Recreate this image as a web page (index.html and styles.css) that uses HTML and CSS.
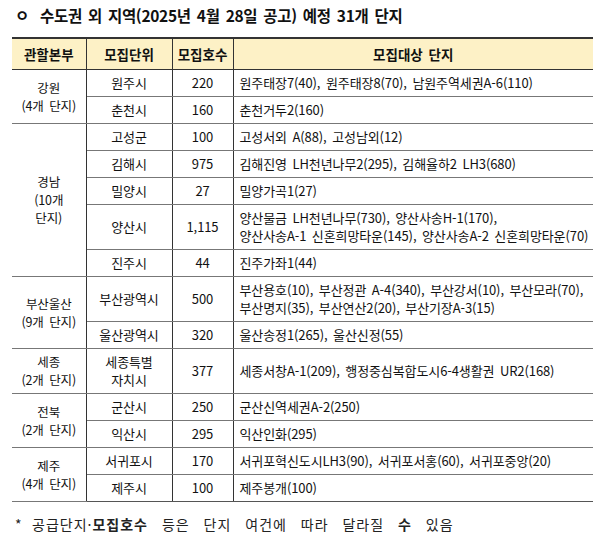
FILE: index.html
```html
<!DOCTYPE html>
<html lang="ko">
<head>
<meta charset="utf-8">
<link rel="stylesheet" href="styles.css">
</head>
<body>
<div class="page">
  <h1 class="title"><span class="bullet">ㅇ</span> 수도권 외 지역(2025년 4월 28일 공고) 예정 31개 단지</h1>
  <table class="tbl">
    <colgroup>
      <col class="c1"><col class="c2"><col class="c3"><col class="c4">
    </colgroup>
    <thead>
      <tr class="hd"><th>관할본부</th><th>모집단위</th><th>모집호수</th><th>모집대상 단지</th></tr>
    </thead>
    <tbody>
      <tr class="r1"><td rowspan="2" class="grp">강원<br>(4개 단지)</td><td>원주시</td><td>220</td><td class="list">원주태장7(40), 원주태장8(70), 남원주역세권A-6(110)</td></tr>
      <tr class="r1"><td>춘천시</td><td>160</td><td class="list">춘천거두2(160)</td></tr>

      <tr class="r1 gtop"><td rowspan="5" class="grp">경남<br>(10개<br>단지)</td><td>고성군</td><td>100</td><td class="list">고성서외 A(88), 고성남외(12)</td></tr>
      <tr class="r1"><td>김해시</td><td>975</td><td class="list">김해진영 LH천년나무2(295), 김해율하2 LH3(680)</td></tr>
      <tr class="r1"><td>밀양시</td><td>27</td><td class="list">밀양가곡1(27)</td></tr>
      <tr class="r2"><td>양산시</td><td>1,115</td><td class="list">양산물금 LH천년나무(730), 양산사송H-1(170),<br>양산사송A-1 신혼희망타운(145), 양산사송A-2 신혼희망타운(70)</td></tr>
      <tr class="r1"><td>진주시</td><td>44</td><td class="list">진주가좌1(44)</td></tr>

      <tr class="r2 gtop"><td rowspan="2" class="grp">부산울산<br>(9개 단지)</td><td>부산광역시</td><td>500</td><td class="list">부산용호(10), 부산정관 A-4(340), 부산강서(10), 부산모라(70),<br>부산명지(35), 부산연산2(20), 부산기장A-3(15)</td></tr>
      <tr class="r1"><td>울산광역시</td><td>320</td><td class="list">울산송정1(265), 울산신정(55)</td></tr>

      <tr class="r2 gtop"><td class="grp">세종<br>(2개 단지)</td><td>세종특별<br>자치시</td><td>377</td><td class="list">세종서창A-1(209), 행정중심복합도시6-4생활권 UR2(168)</td></tr>

      <tr class="r1 gtop"><td rowspan="2" class="grp">전북<br>(2개 단지)</td><td>군산시</td><td>250</td><td class="list">군산신역세권A-2(250)</td></tr>
      <tr class="r1"><td>익산시</td><td>295</td><td class="list">익산인화(295)</td></tr>

      <tr class="r1 gtop"><td rowspan="2" class="grp">제주<br>(4개 단지)</td><td>서귀포시</td><td>170</td><td class="list">서귀포혁신도시LH3(90), 서귀포서홍(60), 서귀포중앙(20)</td></tr>
      <tr class="r1 last"><td>제주시</td><td>100</td><td class="list">제주봉개(100)</td></tr>
    </tbody>
  </table>
  <p class="note"><span class="star">*</span>공급단지·<b>모집호수</b> 등은 단지 여건에 따라 달라질 <b>수</b> 있음</p>
</div>
</body>
</html>
```
FILE: styles.css
```css
html, body {
  margin: 0;
  padding: 0;
  background: #ffffff;
}
body {
  font-family: "Noto Sans CJK KR", "Noto Sans", sans-serif;
  color: #111;
}
.page {
  width: 600px;
  padding: 5px 0 0 12px;
  box-sizing: border-box;
}
.title {
  margin: 0 0 0 3px;
  font-size: 15.5px;
  font-weight: 700;
  line-height: 21px;
  letter-spacing: -0.3px;
  word-spacing: 2px;
  color: #111;
}
.bullet {
  font-weight: 700;
  margin-right: 5px;
}
.tbl {
  margin-top: 11px;
  width: 581px;
  border-collapse: collapse;
  table-layout: fixed;
  font-size: 13px;
  letter-spacing: -0.1px;
  word-spacing: 2px;
}
.c1 { width: 74px; }
.c2 { width: 86px; }
.c3 { width: 61px; }
.c4 { width: 360px; }
.tbl th, .tbl td {
  border-left: 1px solid #333;
  border-right: 1px solid #333;
  border-bottom: 1px solid #777;
  padding: 0;
  text-align: center;
  vertical-align: middle;
  line-height: 18px;
}
.tbl tr > :first-child { border-left: none; }
.tbl tr > :last-child { border-right: none; }
.hd th {
  background: #fdf1c6;
  font-weight: 700;
  height: 30px;
  border-top: 2px solid #333;
  border-bottom: 1px solid #333;
  font-size: 13.5px;
  letter-spacing: 0;
}
.r1 td { height: 26px; }
.r2 td { height: 44px; }
.tbl td.grp {
  border-left: none;
  line-height: 18px;
  font-size: 12.5px;
}
.tbl td.list {
  text-align: left;
  padding-left: 6px;
  border-right: none;
}
.last td { border-bottom: 1px solid #555; }
.note {
  margin: 12px 0 0 3px;
  font-size: 14px;
  word-spacing: 9px;
  letter-spacing: 1px;
  color: #222;
}
.star {
  display: inline-block;
  width: 17px;
}
.note b { font-weight: 700; }
```
